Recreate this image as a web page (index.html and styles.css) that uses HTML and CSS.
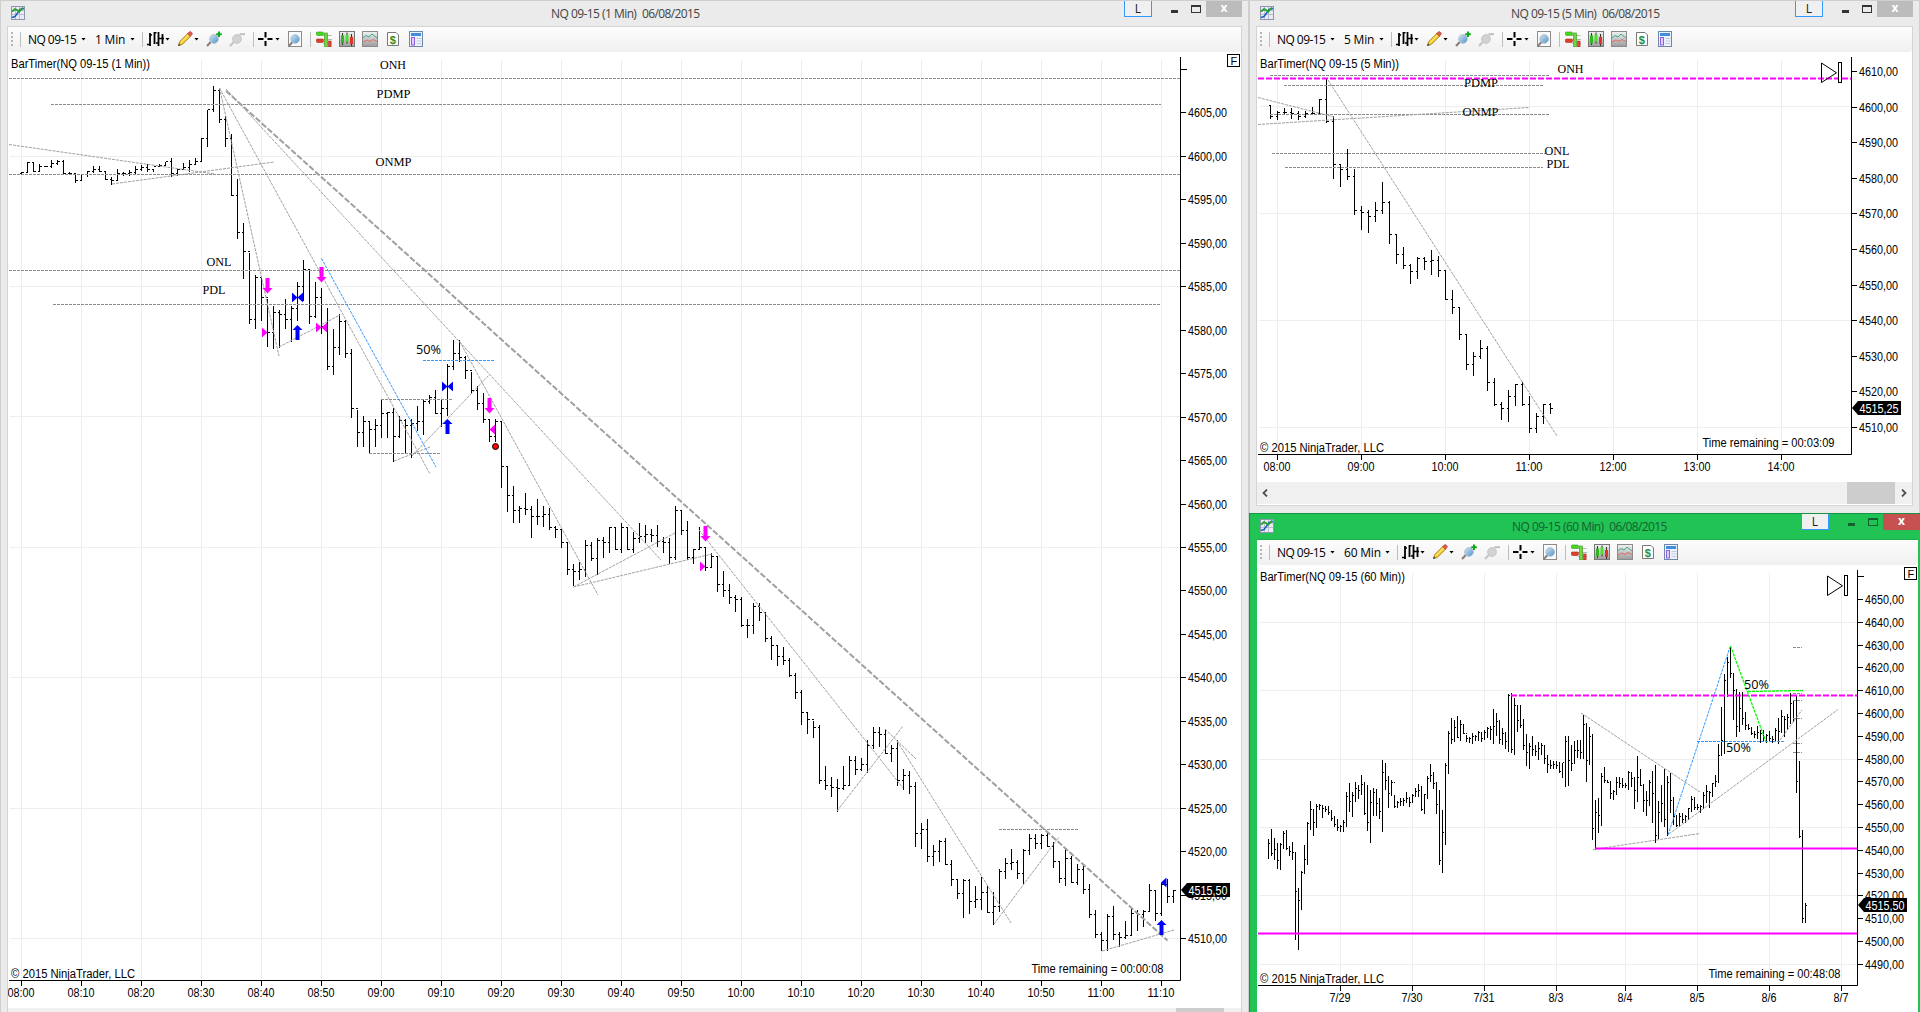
FILE: index.html
```html
<!DOCTYPE html>
<html lang="en">
<head>
  <meta charset="UTF-8" />
  <meta name="viewport" content="width=device-width, initial-scale=1.0"/>
  <title>NQ 09-15 Charts</title>
  <link rel="stylesheet" href="styles.css">
</head>
<body>
  <!-- Shared icons -->
  <svg class="sprite" width="0" height="0">
    <defs>
      <linearGradient id="lens" x1="0" y1="0" x2="1" y2="1">
        <stop offset="0" stop-color="#cfe6f7"/><stop offset="1" stop-color="#4f93c8"/>
      </linearGradient>
      <linearGradient id="steel" x1="0" y1="0" x2="0" y2="1">
        <stop offset="0" stop-color="#f2f2f2"/><stop offset="1" stop-color="#9c9c9c"/>
      </linearGradient>
    </defs>
    <symbol id="i-app" viewBox="0 0 14 14">
      <rect x=".5" y=".5" width="13" height="13" fill="#e9ebf6" stroke="#8f96ad"/>
      <path d="M4.5 1v12M8.5 1v12M1 4.5h12M1 8.5h12" stroke="#b9bdd4"/>
      <path d="M1 11.5l3-1 3-4 2-3 4-1" fill="none" stroke="#1b5fb8" stroke-width="1.5"/>
      <path d="M1 5.5l3-2.5 2 1 2 2 4-4.500" fill="none" stroke="#23a323" stroke-width="1.7"/>
    </symbol>
    <symbol id="i-bars" viewBox="0 0 17 16">
      <path d="M3 2v13M7.500 1v12M11.500 1v14M15.500 3v10" stroke="#000" stroke-width="1.8"/>
      <path d="M0 13.500h3M3 4h2M7 1.800h2.500M9 12h2M12 7.500h5" stroke="#000" stroke-width="1.6"/>
    </symbol>
    <symbol id="i-pencil" viewBox="0 0 16 16">
      <path d="M1.500 14.500l1.200-4L11 2.300l2.800 2.700L5.500 13.300z" fill="#f5cf2e" stroke="#9a7420" stroke-width=".8"/>
      <path d="M10.600 2.600l1.700-1.700q1-.8 2 .2l.6.600q.9 1 0 2l-1.600 1.600z" fill="#e45b4b" stroke="#9b3b30" stroke-width=".6"/>
      <path d="M1.200 14.900l.7-2.300 1.600 1.600z" fill="#333"/>
      <path d="M4 11.500l7.500-7.500" stroke="#fff29b" stroke-width="1"/>
    </symbol>
    <symbol id="i-zoomin" viewBox="0 0 16 16">
      <path d="M5 10.800L1 15" stroke="#8a7b78" stroke-width="2"/>
      <circle cx="8" cy="8" r="4.400" fill="url(#lens)" stroke="#b7c3cf"/>
      <path d="M13 .5v5.500M10.200 3.200h5.600" stroke="#0fa81e" stroke-width="2"/>
    </symbol>
    <symbol id="i-zoomout" viewBox="0 0 16 16">
      <path d="M5 10.800L1 15" stroke="#c4c4c4" stroke-width="2"/>
      <circle cx="8" cy="8" r="4.400" fill="#d2d2d2" stroke="#c6c6c6"/>
      <path d="M10.500 3.200h5.500" stroke="#bdbdbd" stroke-width="2"/>
    </symbol>
    <symbol id="i-cross" viewBox="0 0 15 16">
      <path d="M7.500 1v5.500M7.500 10v5M0 8h5.500M9.500 8h5" stroke="#000" stroke-width="2"/>
    </symbol>
    <symbol id="i-page" viewBox="0 0 16 16">
      <rect x=".5" y=".5" width="13" height="15" fill="#fafafa" stroke="#8b8b8b"/>
      <path d="M4.500 11L.8 15.200" stroke="#8a7b78" stroke-width="2"/>
      <circle cx="7.200" cy="8" r="4.300" fill="url(#lens)" stroke="#a9bccd"/>
    </symbol>
    <symbol id="i-dom" viewBox="0 0 16 16">
      <path d="M7 4.500h8.500M7 8.500h9M7 12.500h9" stroke="#b5b5b5"/>
      <rect x=".4" y="1" width="7" height="3.400" rx="1" fill="#47d91e" stroke="#2b9a12" stroke-width=".6"/>
      <rect x=".4" y="8" width="7" height="3.400" rx="1" fill="#e3402c" stroke="#a32518" stroke-width=".6"/>
      <rect x="8.500" y="2" width="3" height="14" fill="#6fd83b" stroke="#3c931c" stroke-width=".6"/>
      <rect x="12.500" y="10" width="2.600" height="6" fill="#dd4437" stroke="#a5271b" stroke-width=".5"/>
    </symbol>
    <symbol id="i-candles" viewBox="0 0 16 16">
      <rect x=".5" y=".5" width="15" height="15" fill="url(#steel)" stroke="#777"/>
      <path d="M3.500 2v12M8 1.500v11M12.500 3v12" stroke="#333"/>
      <rect x="2" y="4.500" width="3" height="8" fill="#35b524"/>
      <rect x="6.500" y="3.500" width="3" height="7" fill="#4ee02e"/>
      <rect x="11" y="6" width="3" height="7" fill="#de3526"/>
    </symbol>
    <symbol id="i-indicator" viewBox="0 0 16 16">
      <rect x=".5" y=".5" width="15" height="15" fill="url(#steel)" stroke="#8b8b8b"/>
      <path d="M1 7l3-2.500 3 1.500L10 3l5 4" fill="none" stroke="#3aa98a"/>
      <path d="M1 11l4-2 3 1.500 3-2 4 2" fill="none" stroke="#e06a62"/>
    </symbol>
    <symbol id="i-dollar" viewBox="0 0 16 16">
      <path d="M2.500 1.500h8.500l2.500 2.500v10.500h-11z" fill="#fff" stroke="#777"/>
      <text x="4.700" y="12.500" class="dollar">$</text>
    </symbol>
    <symbol id="i-props" viewBox="0 0 16 16">
      <rect x="1.500" y=".5" width="13" height="15" fill="#eef3fb" stroke="#6f87ab"/>
      <rect x="3" y="2" width="10" height="3" fill="#3f8fdc"/>
      <rect x="3.500" y="6.500" width="3" height="7.500" fill="#e4ccff" stroke="#8b5fe0"/>
      <path d="M8.500 7.500h5M8.500 10h5M8.500 12.500h5" stroke="#c2cbe0"/>
    </symbol>
    <symbol id="i-play" viewBox="0 0 22 22">
      <path d="M.500 1v19.500L15.500 10.800z" fill="none" stroke="#000"/>
      <rect x="17.500" y=".5" width="3" height="20" fill="#fff" stroke="#000"/>
    </symbol>
    <symbol id="m-down" viewBox="0 0 10 16" overflow="visible">
      <path d="M3 0h4v10h3l-5 5.500L0 10h3z"/>
    </symbol>
    <symbol id="m-up" viewBox="0 0 10 16" overflow="visible">
      <path d="M5 0l5 5H7v10H3V5H0z"/>
    </symbol>
    <symbol id="m-tie" viewBox="0 0 12 10">
      <path d="M.5 0L6 5 .5 10zM11.500 0L6 5l5.500 5z"/>
    </symbol>
  </svg>

  <!-- 1 minute window -->
  <section class="window tall">
    <header class="titlebar">
      <svg class="app"><use href="#i-app"/></svg>
      <h1>NQ 09-15 (1 Min)&nbsp; 06/08/2015</h1>
      <div class="controls"><span class="link">L</span><i class="min"></i><i class="max"></i><span class="close">x</span></div>
    </header>
    <div class="content">
      <div class="toolbar">
        <i class="grip"></i><i class="sep s1"></i>
        <span class="name">NQ 09-15</span><i class="caret c1"></i>
        <span class="tf">1 Min</span><i class="caret c2"></i><i class="sep s2"></i>
        <svg class="bars"><use href="#i-bars"/></svg><i class="caret"></i>
        <svg><use href="#i-pencil"/></svg><i class="caret"></i>
        <svg><use href="#i-zoomin"/></svg>
        <svg><use href="#i-zoomout"/></svg><i class="sep s3"></i>
        <svg class="cross"><use href="#i-cross"/></svg><i class="caret c3"></i>
        <svg class="page"><use href="#i-page"/></svg><i class="sep s4"></i>
        <svg class="first"><use href="#i-dom"/></svg>
        <svg><use href="#i-candles"/></svg>
        <svg><use href="#i-indicator"/></svg>
        <svg><use href="#i-dollar"/></svg>
        <svg><use href="#i-props"/></svg>
      </div>
      <svg class="chart" id="chart1" width="1233" height="956" viewBox="8 52 1233 956">
        <g class="grid"></g>
        <path class="ohlc"/>
        <g class="dash">
          <path d="M9 78.500H1180M51 104.500H1161M9 174.500H1180M9 270.500H1180M53 304.500H1161"/>
          <path d="M381 399.500H453M369 453.500H441M999 829.500H1078"/>
        </g>
        <g class="trend">
          <path d="M9 144.500L215 174M112 184L274 162M219.500 88L279 356M219.500 88L430 474M226 89L661 560"/>
          <path d="M279 347L340 315M394 461L430 447M412 456L490 374M459.500 341L598 595"/>
          <path d="M573.500 587L675 533M573.500 587L712 554M699 530L903 788M837 811L903 726M885 729L916 759"/>
          <path d="M897 741L1011 923M994 924L1059 837M1102 951L1174 930"/>
        </g>
        <path class="main-trend" d="M226 91L1167.500 940.500"/>
        <path class="blue-dash" d="M321.500 258.500L436 467M423 360.500H495"/>
        <g fill="#f0f">
          <use href="#m-down" x="262.500" y="278" width="10" height="16"/>
          <use href="#m-down" x="316.500" y="267" width="10" height="16"/>
          <use href="#m-down" x="484.500" y="398" width="10" height="16"/>
          <use href="#m-down" x="700.500" y="526" width="10" height="16"/>
          <use href="#m-tie" x="315.500" y="322.500" width="12" height="10"/>
          <path d="M262 327.500l5.500 5-5.500 5zM700 561.500l5.500 5-5.500 5zM495 424.500l-5.500 5 5.500 5z"/>
        </g>
        <g fill="#00f">
          <use href="#m-up" x="292.500" y="325" width="10" height="16"/>
          <use href="#m-up" x="442.500" y="419" width="10" height="16"/>
          <use href="#m-up" x="1156.500" y="920" width="10" height="16"/>
          <use href="#m-tie" x="291.500" y="292.500" width="12" height="10"/>
          <use href="#m-tie" x="441.500" y="381.500" width="12" height="10"/>
          <path d="M1166.500 877.500l-5.500 5 5.500 5z"/>
        </g>
        <circle cx="495.500" cy="446.500" r="3" fill="#f00" stroke="#000"/>
        <g class="level">
          <text x="380" y="69" textLength="26" lengthAdjust="spacingAndGlyphs">ONH</text>
          <text x="376.500" y="98" textLength="34" lengthAdjust="spacingAndGlyphs">PDMP</text>
          <text x="375.500" y="166" textLength="36" lengthAdjust="spacingAndGlyphs">ONMP</text>
          <text x="206.500" y="266" textLength="25" lengthAdjust="spacingAndGlyphs">ONL</text>
          <text x="202.500" y="294" textLength="23" lengthAdjust="spacingAndGlyphs">PDL</text>
        </g>
        <text class="half" x="416" y="354" textLength="25" lengthAdjust="spacingAndGlyphs">50%</text>
        <text x="11" y="68" textLength="139" lengthAdjust="spacingAndGlyphs">BarTimer(NQ 09-15 (1 Min))</text>
        <text x="11" y="978" textLength="124" lengthAdjust="spacingAndGlyphs">© 2015 NinjaTrader, LLC</text>
        <text x="1031.500" y="973" textLength="132" lengthAdjust="spacingAndGlyphs">Time remaining = 00:00:08</text>
        <g class="axis"></g>
        <rect x="1227.500" y="54.500" width="12" height="12" fill="#fff" stroke="#000"/>
        <text x="1230.500" y="65" class="flag">F</text>
      </svg>
      <div class="scroll thin"><i class="thumb"></i></div>
    </div>
  </section>

  <div class="side">
    <!-- 5 minute window -->
    <section class="window">
      <header class="titlebar">
        <svg class="app"><use href="#i-app"/></svg>
        <h1>NQ 09-15 (5 Min)&nbsp; 06/08/2015</h1>
        <div class="controls"><span class="link">L</span><i class="min"></i><i class="max"></i><span class="close">x</span></div>
      </header>
      <div class="content">
        <div class="toolbar">
          <i class="grip"></i><i class="sep s1"></i>
          <span class="name">NQ 09-15</span><i class="caret c1"></i>
          <span class="tf">5 Min</span><i class="caret c2"></i><i class="sep s2"></i>
          <svg class="bars"><use href="#i-bars"/></svg><i class="caret"></i>
          <svg><use href="#i-pencil"/></svg><i class="caret"></i>
          <svg><use href="#i-zoomin"/></svg>
          <svg><use href="#i-zoomout"/></svg><i class="sep s3"></i>
          <svg class="cross"><use href="#i-cross"/></svg><i class="caret c3"></i>
          <svg class="page"><use href="#i-page"/></svg><i class="sep s4"></i>
          <svg class="first"><use href="#i-dom"/></svg>
          <svg><use href="#i-candles"/></svg>
          <svg><use href="#i-indicator"/></svg>
          <svg><use href="#i-dollar"/></svg>
          <svg><use href="#i-props"/></svg>
        </div>
        <svg class="chart" id="chart5" width="655" height="430" viewBox="1257 52 655 430">
          <g class="grid"></g>
          <path class="ohlc"/>
          <g class="dash">
            <path d="M1270 75.500H1549M1284 85.500H1543M1270 114.500H1549M1272 153.500H1546M1285 167.500H1543"/>
          </g>
          <path class="trend" d="M1258 97.500L1334 117M1258 124.500L1529 107.500M1328 80L1557 436"/>
          <path class="magenta dashed" d="M1258 78.500H1851"/>
          <g class="level">
            <text x="1557.500" y="73" textLength="26" lengthAdjust="spacingAndGlyphs">ONH</text>
            <text x="1464" y="87" textLength="34" lengthAdjust="spacingAndGlyphs">PDMP</text>
            <text x="1462.500" y="116" textLength="36" lengthAdjust="spacingAndGlyphs">ONMP</text>
            <text x="1544.500" y="155" textLength="25" lengthAdjust="spacingAndGlyphs">ONL</text>
            <text x="1546.500" y="168" textLength="23" lengthAdjust="spacingAndGlyphs">PDL</text>
          </g>
          <text x="1260" y="68" textLength="139" lengthAdjust="spacingAndGlyphs">BarTimer(NQ 09-15 (5 Min))</text>
          <text x="1260" y="452" textLength="124" lengthAdjust="spacingAndGlyphs">© 2015 NinjaTrader, LLC</text>
          <text x="1702.500" y="447" textLength="132" lengthAdjust="spacingAndGlyphs">Time remaining = 00:03:09</text>
          <use href="#i-play" x="1821" y="62" width="22" height="22"/>
          <g class="axis"></g>
        </svg>
        <div class="scroll">
          <svg class="arrow" viewBox="0 0 6 8"><path d="M5 .5L1.500 4 5 7.500"/></svg>
          <i class="thumb"></i>
          <svg class="arrow" viewBox="0 0 6 8"><path d="M1 .5L4.500 4 1 7.500"/></svg>
        </div>
      </div>
    </section>

    <!-- 60 minute window (active) -->
    <section class="window active">
      <header class="titlebar">
        <svg class="app"><use href="#i-app"/></svg>
        <h1>NQ 09-15 (60 Min)&nbsp; 06/08/2015</h1>
        <div class="controls"><span class="link">L</span><i class="min"></i><i class="max"></i><span class="close">x</span></div>
      </header>
      <div class="content">
        <div class="toolbar">
          <i class="grip"></i><i class="sep s1"></i>
          <span class="name">NQ 09-15</span><i class="caret c1"></i>
          <span class="tf wide">60 Min</span><i class="caret c2"></i><i class="sep s2"></i>
          <svg class="bars"><use href="#i-bars"/></svg><i class="caret"></i>
          <svg><use href="#i-pencil"/></svg><i class="caret"></i>
          <svg><use href="#i-zoomin"/></svg>
          <svg><use href="#i-zoomout"/></svg><i class="sep s3"></i>
          <svg class="cross"><use href="#i-cross"/></svg><i class="caret c3"></i>
          <svg class="page"><use href="#i-page"/></svg><i class="sep s4"></i>
          <svg class="first"><use href="#i-dom"/></svg>
          <svg><use href="#i-candles"/></svg>
          <svg><use href="#i-indicator"/></svg>
          <svg><use href="#i-dollar"/></svg>
          <svg><use href="#i-props"/></svg>
        </div>
        <svg class="chart" id="chart60" width="661" height="447" viewBox="1257 565 661 447">
          <g class="grid"></g>
          <path class="ohlc"/>
          <path class="dash" d="M1793 647.500h9M1793 693.500h9M1793 700.500h9M1793 718.500h9M1793 743.500h9M1793 752.500h9"/>
          <path class="trend" d="M1581 713L1700 792M1593 849.500L1700 833.500M1669 834L1838 709.500M1780 740L1802 710"/>
          <path class="magenta dashed" d="M1511 695.500H1857"/>
          <path class="magenta" d="M1595 848.500H1857M1258 933.500H1857"/>
          <path class="blue-dash" d="M1668 835L1730 647M1697 741.500H1784"/>
          <path class="green-dash" d="M1730.500 646L1766 742M1748 691.500L1803 690.500"/>
          <text class="half" x="1744" y="689" textLength="25" lengthAdjust="spacingAndGlyphs">50%</text>
          <text class="half" x="1726" y="751.500" textLength="25" lengthAdjust="spacingAndGlyphs">50%</text>
          <text x="1260" y="581" textLength="145" lengthAdjust="spacingAndGlyphs">BarTimer(NQ 09-15 (60 Min))</text>
          <text x="1260" y="983" textLength="124" lengthAdjust="spacingAndGlyphs">© 2015 NinjaTrader, LLC</text>
          <text x="1708.500" y="978" textLength="132" lengthAdjust="spacingAndGlyphs">Time remaining = 00:48:08</text>
          <use href="#i-play" x="1827" y="575" width="22" height="22"/>
          <g class="axis"></g>
          <rect x="1904.500" y="567.500" width="12" height="12" fill="#fff" stroke="#000"/>
          <text x="1907.500" y="578" class="flag">F</text>
        </svg>
      </div>
    </section>
  </div>

  <script src="script.js"></script>
</body>
</html>
```
FILE: styles.css
```css
* {
  margin: 0;
  padding: 0;
  box-sizing: border-box;
}
body {
  display: grid;
  grid-template-columns: 1249px 671px;
  width: 1920px;
  height: 1012px;
  overflow: hidden;
  background: #ebebeb;
  font-family: "Open Sans", "Noto Sans", sans-serif;
  font-size: 12px;
}
.sprite {
  position: absolute;
}
.side {
  display: grid;
  grid-template-rows: 513px 499px;
}

/* ================================
   Window
   ================================ */
.window {
  display: flex;
  flex-direction: column;
  background: #ebebeb;
  border: 1px solid #cfcfcf;
  border-bottom: none;
  padding: 0 6px 7px 6px;
  overflow: hidden;
}
.window.tall {
  padding-bottom: 0;
}
.window.active {
  background: #22c355;
  border-color: #179443;
  border-right: none;
  padding: 0 2px 0 7px;
}
.titlebar {
  display: grid;
  grid-template-columns: 1fr auto 1fr;
  height: 25px;
  flex-shrink: 0;
}
.active .titlebar {
  margin-right: -2px;
}
.app {
  width: 14px;
  height: 14px;
  margin: 5px 0 0 4px;
}
.active .app {
  margin-left: 3px;
}
.titlebar h1 {
  font-size: 12px;
  font-weight: 400;
  line-height: 26px;
  width: 147px;
  color: #444;
  white-space: nowrap;
  letter-spacing: -0.63px;
  word-spacing: 0.4px;
}
.active h1 {
  width: 153px;
  color: #14602f;
}
.controls {
  display: flex;
  justify-content: flex-end;
  color: #222;
}
.link {
  width: 28px;
  height: 16px;
  border: 1px solid #3399ff;
  border-top: none;
  background: #f0f0f0;
  text-align: center;
  line-height: 15px;
}
.min {
  width: 7px;
  height: 3px;
  margin: 9px 0 0 19px;
  background: #333;
}
.max {
  width: 10px;
  height: 8px;
  margin: 4px 5px 0 13px;
  border: 1px solid #333;
  border-top-width: 2px;
}
.close {
  width: 36px;
  height: 16px;
  background: #bcbcbc;
  color: #fff;
  font-weight: 700;
  text-align: center;
  line-height: 13px;
}
.active .close {
  width: 37px;
  background: #c75050;
}
.active .min {
  background: #14602f;
}
.active .max {
  border-color: #14602f;
}
.content {
  display: flex;
  flex-direction: column;
  flex: 1;
  border: 1px solid #d4d4d4;
  background: #fff;
}
.tall .content {
  border-bottom: none;
}
.active .content {
  border-width: 1px 0 0 0;
  border-color: #1fae4c;
}

/* ================================
   Toolbar
   ================================ */
.toolbar {
  display: flex;
  align-items: center;
  height: 25px;
  padding-bottom: 1px;
  flex-shrink: 0;
  background: linear-gradient(#fdfdfd, #f0f0f0);
  border-radius: 0 0 4px 4px;
}
.toolbar svg {
  width: 16px;
  height: 16px;
  margin-left: 7px;
}
.toolbar .bars {
  width: 17px;
  margin-left: 4px;
}
.toolbar .cross {
  width: 15px;
  margin-left: 4px;
}
.toolbar .page {
  margin-left: 8px;
}
.toolbar .first {
  margin-left: 5px;
}
.grip {
  width: 2px;
  height: 15px;
  margin-left: 3px;
  background: repeating-linear-gradient(#b5b5b5 0 2px, transparent 2px 4px);
}
.sep {
  width: 1px;
  height: 15px;
  background: #bdbdbd;
}
.s1 { margin-left: 7px; }
.s2 { margin-left: 7px; }
.s3 { margin-left: 8px; }
.s4 { margin-left: 6px; }
.name {
  width: 48px;
  margin-left: 7px;
  white-space: nowrap;
  letter-spacing: -0.55px;
}
.tf {
  width: 29px;
  margin-left: 9px;
  white-space: nowrap;
  letter-spacing: -0.2px;
}
.tf.wide {
  width: 35px;
}
.caret {
  width: 5px;
  height: 3px;
  margin-left: 1px;
  background: #000;
  clip-path: polygon(0 0, 100% 0, 50% 100%);
}
.c1 { margin-left: 5px; }
.c2 { margin-left: 6px; }
.c3 { margin-left: 2px; }
.dollar {
  font: bold 11px "Liberation Sans", sans-serif;
  fill: #2e8b2e;
}

/* ================================
   Chart
   ================================ */
.chart {
  display: block;
  flex-shrink: 0;
}
.chart text {
  font-family: "Liberation Sans", Arial, sans-serif;
  font-size: 12px;
}
.chart .level text {
  font-family: "Liberation Serif", serif;
  font-size: 13px;
}
.chart .half {
  font-family: "Open Sans", sans-serif;
  font-size: 13.5px;
}
.chart .flag {
  font-size: 11px;
}
.chart .tag {
  fill: #fff;
}
.grid path {
  stroke: #eee;
}
.axis path {
  fill: none;
  stroke: #000;
}
.axis .tag-box {
  fill: #000;
  stroke: none;
}
.ohlc {
  fill: none;
  stroke: #000;
  shape-rendering: crispEdges;
}
.dash {
  fill: none;
  stroke: #8c8c8c;
  stroke-dasharray: 3 1;
}
.trend {
  fill: none;
  stroke: #a0a0a0;
  stroke-dasharray: 3 1;
}
.main-trend {
  stroke: #a0a0a0;
  stroke-width: 2;
  stroke-dasharray: 6 2;
}
.blue-dash {
  fill: none;
  stroke: #3399ff;
  stroke-dasharray: 3 1;
}
.green-dash {
  fill: none;
  stroke: #0f0;
  stroke-width: 1.3;
  stroke-dasharray: 3 1;
}
.magenta {
  stroke: #f0f;
  stroke-width: 2;
}
.dashed {
  stroke-dasharray: 6 2;
}

/* ================================
   Scrollbars
   ================================ */
.scroll {
  display: flex;
  align-items: center;
  height: 22px;
  background: #f0f0f0;
}
.scroll .thumb {
  width: 48px;
  height: 22px;
  margin-left: auto;
  background: #cdcdcd;
}
.arrow {
  width: 6px;
  height: 8px;
  margin: 0 5px;
}
.thumb + .arrow {
  margin-left: 6px;
}
.arrow path {
  fill: none;
  stroke: #505050;
  stroke-width: 1.8;
}
.scroll.thin {
  height: 4px;
}
.thin .thumb {
  height: 4px;
  margin-right: 17px;
}
```
FILE: script.js
```js
// Each bar is "high low close" in chart units, open is the previous close
const bars1 = `172 173 172,162 171 162,162 171 171,164 171 166,166 166 166,160 167 163,160 164 161,160 173 173,
172 174 173,173 182 180,174 180 174,171 176 171,166 172 169,166 171 171,171 179 179,177 184 180,169 179 173,
172 175 173,170 175 172,166 174 169,165 170 167,164 171 169,169 171 166,164 166 165,162 165 161,158 176 173,
169 175 169,163 169 167,160 171 164,158 164 161,138 160 138,110 146 109,86 111 90,88 122 119,116 146 138,
134 195 195,179 238 232,223 278 251,253 323 319,275 328 277,277 320 297,299 346 332,306 348 312,310 347 314,
299 328 319,306 341 308,282 320 286,260 300 269,269 323 316,282 317 297,288 333 326,308 369 366,329 374 347,
314 354 321,320 357 353,349 417 408,410 446 432,416 446 421,421 453 429,419 446 425,399 437 413,412 437 412,
408 461 436,416 437 420,419 453 425,419 457 423,406 430 421,399 434 401,395 403 397,390 413 413,399 426 408,
364 415 366,340 369 353,340 361 357,356 378 370,372 393 390,386 409 403,393 422 419,419 441 436,419 441 421,
421 487 466,466 511 495,486 522 510,506 522 508,493 514 509,506 537 516,499 524 516,506 526 514,508 529 527,
526 537 529,529 547 542,542 574 569,564 585 571,562 579 569,540 576 545,542 560 558,538 574 540,537 557 542,
527 552 527,527 549 549,523 552 527,527 549 549,532 552 538,523 542 536,525 542 534,529 541 535,525 546 541,
537 552 542,538 563 557,506 559 510,510 534 530,521 559 557,549 563 549,527 549 547,547 570 567,553 567 556,
556 591 584,571 596 590,584 603 597,595 611 599,597 626 625,619 637 625,603 633 606,603 620 612,613 641 638,
636 659 645,645 665 656,647 664 660,658 676 675,673 698 692,690 724 712,712 733 719,721 737 727,725 783 780,
766 789 785,777 796 787,779 811 788,766 789 785,756 785 760,756 774 769,758 770 764,740 772 745,727 748 732,
727 746 734,729 753 753,745 761 748,740 785 780,769 789 775,771 793 786,782 846 833,823 848 829,819 861 856,
845 865 851,840 861 841,838 864 864,860 885 879,879 898 893,879 917 880,879 913 901,886 907 899,877 909 892,
886 912 912,892 924 906,869 911 871,858 878 863,849 869 862,860 878 873,849 884 850,834 854 838,834 848 843,
834 848 835,833 846 846,842 867 861,862 882 878,849 885 858,856 882 882,864 884 869,866 893 889,884 917 914,
910 937 934,932 950 940,914 950 916,906 939 934,932 946 937,921 938 935,908 935 913,910 930 914,910 926 911,
884 911 890,890 920 913,883 915 884,879 902 896,890 902 890`;

const bars5 = `105 118 116,111 119 112,108 113 112,108 118 113,111 119 116,111 117 113,107 113 113,99 113 99,79 122 121,
116 178 164,165 186 169,149 179 176,169 214 210,206 229 212,210 232 216,202 221 210,182 213 202,201 243 234,
234 263 254,247 268 265,264 283 271,257 278 258,257 269 261,250 274 260,256 276 270,270 299 299,290 313 307,
307 339 334,334 369 364,352 375 356,340 358 348,346 390 382,378 405 404,402 419 408,390 421 396,384 405 384,
382 405 404,396 432 428,413 432 416,404 423 404,403 413 408`;

const bars60 = `839 858 843,829 855 853,838 859 849,843 868 860,843 869 844,831 848 833,830 849 848,846 855 851,842 859 852,
852 939 891,888 949 900,871 909 872,845 873 859,822 864 823,801 829 809,809 835 822,804 827 806,804 809 805,
805 817 808,806 811 809,806 814 812,810 820 818,816 826 824,819 830 827,825 831 826,820 831 822,792 826 796,
783 811 801,792 816 795,782 801 788,785 798 790,775 794 784,782 814 813,785 830 822,790 842 802,788 815 792,
789 815 803,798 818 811,760 831 772,763 789 780,776 807 793,780 795 782,795 807 806,801 807 802,798 805 801,
798 805 800,792 802 798,797 806 802,794 802 795,788 796 791,784 796 790,786 810 809,794 813 794,776 798 778,
764 781 775,772 788 783,782 813 804,790 864 860,810 872 832,763 844 765,731 773 733,718 743 739,720 741 727,
716 737 737,720 740 724,724 733 733,735 741 738,737 742 738,733 743 736,735 740 736,731 740 732,732 741 738,
730 739 732,727 737 728,726 739 729,709 743 726,713 735 721,720 743 739,728 744 733,732 748 741,694 751 695,
693 752 749,698 754 705,705 731 720,705 727 725,719 749 745,734 765 752,743 768 746,736 755 749,745 755 751,
742 759 748,743 754 745,745 763 758,755 772 764,760 768 765,761 768 764,761 768 765,762 772 771,763 777 762,
736 786 741,736 785 760,745 770 763,741 763 750,740 757 750,740 758 752,715 758 724,723 781 760,727 764 736,
734 839 828,800 849 812,798 832 815,773 825 776,767 782 780,780 782 782,781 798 793,790 799 791,777 794 782,
777 787 783,778 787 785,783 787 785,771 789 772,772 786 778,777 808 790,756 801 777,769 785 785,784 811 800,
791 815 800,780 805 782,771 822 793,765 842 835,801 838 812,785 821 803,769 826 819,776 835 782,773 812 800,
797 824 816,815 826 825,813 826 816,813 822 819,815 822 816,808 819 808,796 811 799,797 809 807,804 809 807,
805 812 806,792 808 795,785 802 791,791 807 792,783 796 783,775 786 781,744 782 755,707 755 740,674 753 680,
657 696 662,647 677 673,673 719 690,689 736 726,692 731 708,692 724 718,712 729 725,724 729 728,727 734 733,
731 737 734,726 738 732,730 742 733,730 740 737,734 742 735,731 741 738,736 742 739,728 741 730,718 743 731,
710 732 716,716 736 719,714 729 717,693 723 703,700 721 718,696 792 781,761 837 836,830 922 918,903 922 905`;

function times(start, step, count) {
  const out = [];
  for (let i = 0; i < count; i++) {
    const m = start + i * step;
    out.push(String(Math.floor(m / 60)).padStart(2, '0') + ':' + String(m % 60).padStart(2, '0'));
  }
  return out;
}

function label(x, y, width, text, cls) {
  return `<text class="${cls || ''}" x="${x}" y="${y}" textLength="${width}" lengthAdjust="spacingAndGlyphs">${text}</text>`;
}

function drawChart(id, o) {
  const svg = document.getElementById(id);

  // bars
  let d = '';
  let open = null;
  o.bars.split(',').forEach((bar, i) => {
    const [high, low, close] = bar.trim().split(' ').map(Number);
    const x = o.x0 + i * o.step + 0.5;
    if (open === null) open = o.open;
    d += `M${x} ${high}V${low + 1}`;
    d += `M${x - o.tick} ${open + 0.5}H${x}M${x} ${close + 0.5}H${x + o.tick}`;
    open = close;
  });
  svg.querySelector('.ohlc').setAttribute('d', d);

  // grid
  let grid = '';
  o.vlines.forEach(x => { grid += `M${x + 0.5} ${o.top + 3}V${o.bottom}`; });
  o.hlines.forEach(y => { grid += `M${o.left + 1} ${y + 0.5}H${o.right}`; });
  svg.querySelector('.grid').innerHTML = `<path d="${grid}"/>`;

  // axes, ticks and labels
  let axis = `M${o.right + 0.5} ${o.top}V${o.bottom + 0.5}H${o.left}`;
  let labels = '';
  if (o.topTick) axis += `M${o.right} ${o.topTick + 0.5}h7`;
  for (let p = o.priceTop, i = 0; p >= o.priceEnd; p -= o.priceStep, i++) {
    const y = Math.round(o.y0 + i * o.dy);
    axis += `M${o.right} ${y + 0.5}h6`;
    labels += label(o.right + 8, y + 5, 39, p + ',00');
  }
  o.vlines.forEach((x, i) => {
    axis += `M${x + 0.5} ${o.bottom}v6`;
    const w = { 5: 27, 4: 21, 3: 15 }[o.labels[i].length];
    labels += label(x - w / 2, o.bottom + 17, w, o.labels[i]);
  });
  const t = o.tagY;
  const r = o.right + 1;
  labels += `<path class="tag-box" d="M${r} ${t}l6-7h43v14h-43z"/>`;
  labels += label(r + 7.5, t + 4.5, 39, o.price, 'tag');
  svg.querySelector('.axis').innerHTML = `<path d="${axis}"/>` + labels;
}

const every = (from, step, count) => Array.from({ length: count }, (_, i) => from + i * step);

drawChart('chart1', {
  bars: bars1, x0: 21, step: 6, tick: 2, open: 173,
  left: 9, right: 1180, top: 57, bottom: 980, topTick: 69,
  vlines: every(21, 60, 20), labels: times(480, 10, 20),
  hlines: [156, 286, 416, 547, 677, 808, 938],
  priceTop: 4605, priceEnd: 4510, priceStep: 5, y0: 112.2, dy: 43.48,
  tagY: 890, price: '4515,50'
});

drawChart('chart5', {
  bars: bars5, x0: 1270, step: 7, tick: 2, open: 105,
  left: 1258, right: 1851, top: 57, bottom: 454,
  vlines: every(1277, 84, 7), labels: times(480, 60, 7),
  hlines: [106, 213, 320, 427],
  priceTop: 4610, priceEnd: 4510, priceStep: 10, y0: 71, dy: 35.6,
  tagY: 408, price: '4515,25'
});

drawChart('chart60', {
  bars: bars60, x0: 1268, step: 3, tick: 1, open: 856,
  left: 1258, right: 1857, top: 570, bottom: 985, topTick: 576,
  vlines: [1340, 1412, 1484, 1556, 1625, 1697, 1769, 1841],
  labels: ['7/29', '7/30', '7/31', '8/3', '8/4', '8/5', '8/6', '8/7'],
  hlines: [622, 690, 759, 827, 895, 964],
  priceTop: 4650, priceEnd: 4490, priceStep: 10, y0: 599, dy: 22.8,
  tagY: 905, price: '4515,50'
});
```
